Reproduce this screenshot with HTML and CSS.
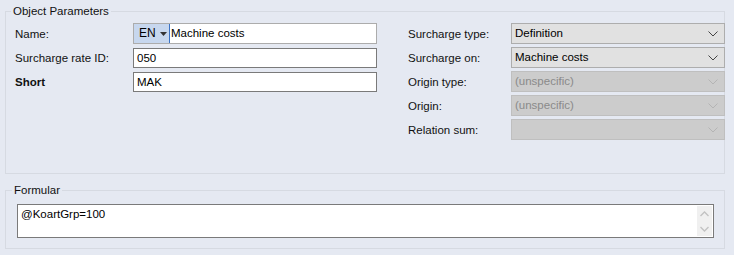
FILE: index.html
```html
<!DOCTYPE html>
<html lang="en">
<head>
    <meta charset="UTF-8">
    <title>Object Parameters</title>
    <link rel="stylesheet" href="styles.css">
</head>
<body>
    <!-- Object parameters group -->
    <fieldset class="group params">
        <legend>Object Parameters</legend>
        <div class="params-grid">
            <div class="col left-col">
                <div class="row">
                    <label>Name:</label>
                    <div class="input name-input">
                        <span class="lang">EN <svg width="7" height="4" viewBox="0 0 7 4"><path d="M0 0h7L3.5 4z" fill="#333"/></svg></span>
                        <span class="caret"></span>
                        <span class="value">Machine costs</span>
                    </div>
                </div>
                <div class="row">
                    <label>Surcharge rate ID:</label>
                    <div class="input">050</div>
                </div>
                <div class="row">
                    <label class="bold">Short</label>
                    <div class="input">MAK</div>
                </div>
            </div>
            <div class="col right-col">
                <div class="row">
                    <label>Surcharge type:</label>
                    <div class="combo">Definition<svg class="chev" width="10" height="6" viewBox="0 0 10 6"><path d="M0.5 0.5l4.5 4.5 4.5-4.5" fill="none" stroke="#444"/></svg></div>
                </div>
                <div class="row">
                    <label>Surcharge on:</label>
                    <div class="combo">Machine costs<svg class="chev" width="10" height="6" viewBox="0 0 10 6"><path d="M0.5 0.5l4.5 4.5 4.5-4.5" fill="none" stroke="#444"/></svg></div>
                </div>
                <div class="row">
                    <label>Origin type:</label>
                    <div class="combo disabled">(unspecific)<svg class="chev" width="10" height="6" viewBox="0 0 10 6"><path d="M0.5 0.5l4.5 4.5 4.5-4.5" fill="none" stroke="#b4b4b4"/></svg></div>
                </div>
                <div class="row">
                    <label>Origin:</label>
                    <div class="combo disabled">(unspecific)<svg class="chev" width="10" height="6" viewBox="0 0 10 6"><path d="M0.5 0.5l4.5 4.5 4.5-4.5" fill="none" stroke="#b4b4b4"/></svg></div>
                </div>
                <div class="row">
                    <label>Relation sum:</label>
                    <div class="combo disabled"><svg class="chev" width="10" height="6" viewBox="0 0 10 6"><path d="M0.5 0.5l4.5 4.5 4.5-4.5" fill="none" stroke="#b4b4b4"/></svg></div>
                </div>
            </div>
        </div>
    </fieldset>

    <!-- Formula group -->
    <fieldset class="group formula">
        <legend>Formular</legend>
        <div class="textarea">
            <span class="text">@KoartGrp=100</span>
            <div class="scroll">
                <svg width="9" height="6" viewBox="0 0 9 6"><path d="M0.5 5l4-4 4 4" fill="none" stroke="#c2c2c2" stroke-width="1.3"/></svg>
                <svg width="9" height="6" viewBox="0 0 9 6"><path d="M0.5 1l4 4 4-4" fill="none" stroke="#c2c2c2" stroke-width="1.3"/></svg>
            </div>
        </div>
    </fieldset>
</body>
</html>
```

FILE: styles.css
```css
body {
    margin: 0;
    width: 734px;
    height: 255px;
    overflow: hidden;
    background: #e5e9f2;
    font-family: 'Liberation Sans', Arial, sans-serif;
    font-size: 11.5px;
    color: #111;
}
.group {
    border: 1px solid #d6dae2;
    margin: 0 9px 0 5px;
    padding: 0;
    min-width: 0;
}
.group legend {
    line-height: 14px;
    padding: 0 2px;
    color: #111;
}
.params {
    margin-top: 4px;
    padding: 0 0 0 9px;
    height: 168px;
}
.params legend {
    margin-left: -4px;
}
.params-grid {
    display: flex;
    margin-top: 5px;
}
.col {
    display: flex;
    flex-direction: column;
}
.left-col {
    width: 362px;
    gap: 4px;
}
.right-col {
    margin-left: 31px;
    gap: 3px;
}
.row {
    display: flex;
    align-items: center;
}
.left-col label {
    width: 118px;
}
.right-col label {
    width: 103px;
}
.bold {
    font-weight: bold;
}
.input {
    box-sizing: border-box;
    width: 244px;
    height: 20px;
    border: 1px solid #7a7a7a;
    background: #fff;
    padding-left: 3px;
    line-height: 18px;
    color: #000;
}
.name-input {
    height: 21px;
    display: flex;
    padding: 0;
    border-color: #acacac;
    line-height: 19px;
}
.lang {
    display: flex;
    align-items: center;
    gap: 4px;
    width: 35px;
    padding-left: 5px;
    box-sizing: border-box;
    background: #c7d7ee;
    font-size: 12px;
}
.caret {
    width: 1px;
    background: #3a72c4;
}
.value {
    padding-left: 1px;
}
.combo {
    box-sizing: border-box;
    width: 214px;
    height: 21px;
    border: 1px solid #adadad;
    background: #e1e1e1;
    padding-left: 3px;
    line-height: 19px;
    display: flex;
    align-items: center;
    color: #000;
}
.combo .chev {
    margin-left: auto;
    margin-right: 6px;
}
.combo.disabled {
    background: #cccccc;
    border-color: #bfbfbf;
    color: #8a8a8a;
}
.formula {
    margin-top: 9px;
    padding: 0 10px 10px 11px;
}
.formula legend {
    margin-left: -5px;
}
.textarea {
    box-sizing: border-box;
    margin-top: 7px;
    height: 34px;
    border: 1px solid #7a7a7a;
    background: #fff;
    display: flex;
    justify-content: space-between;
}
.textarea .text {
    padding: 2px 0 0 3px;
    line-height: 14px;
    color: #000;
}
.scroll {
    width: 15px;
    margin: 1px;
    background: #f0f0f0;
    display: flex;
    flex-direction: column;
    justify-content: space-around;
    align-items: center;
}
```
